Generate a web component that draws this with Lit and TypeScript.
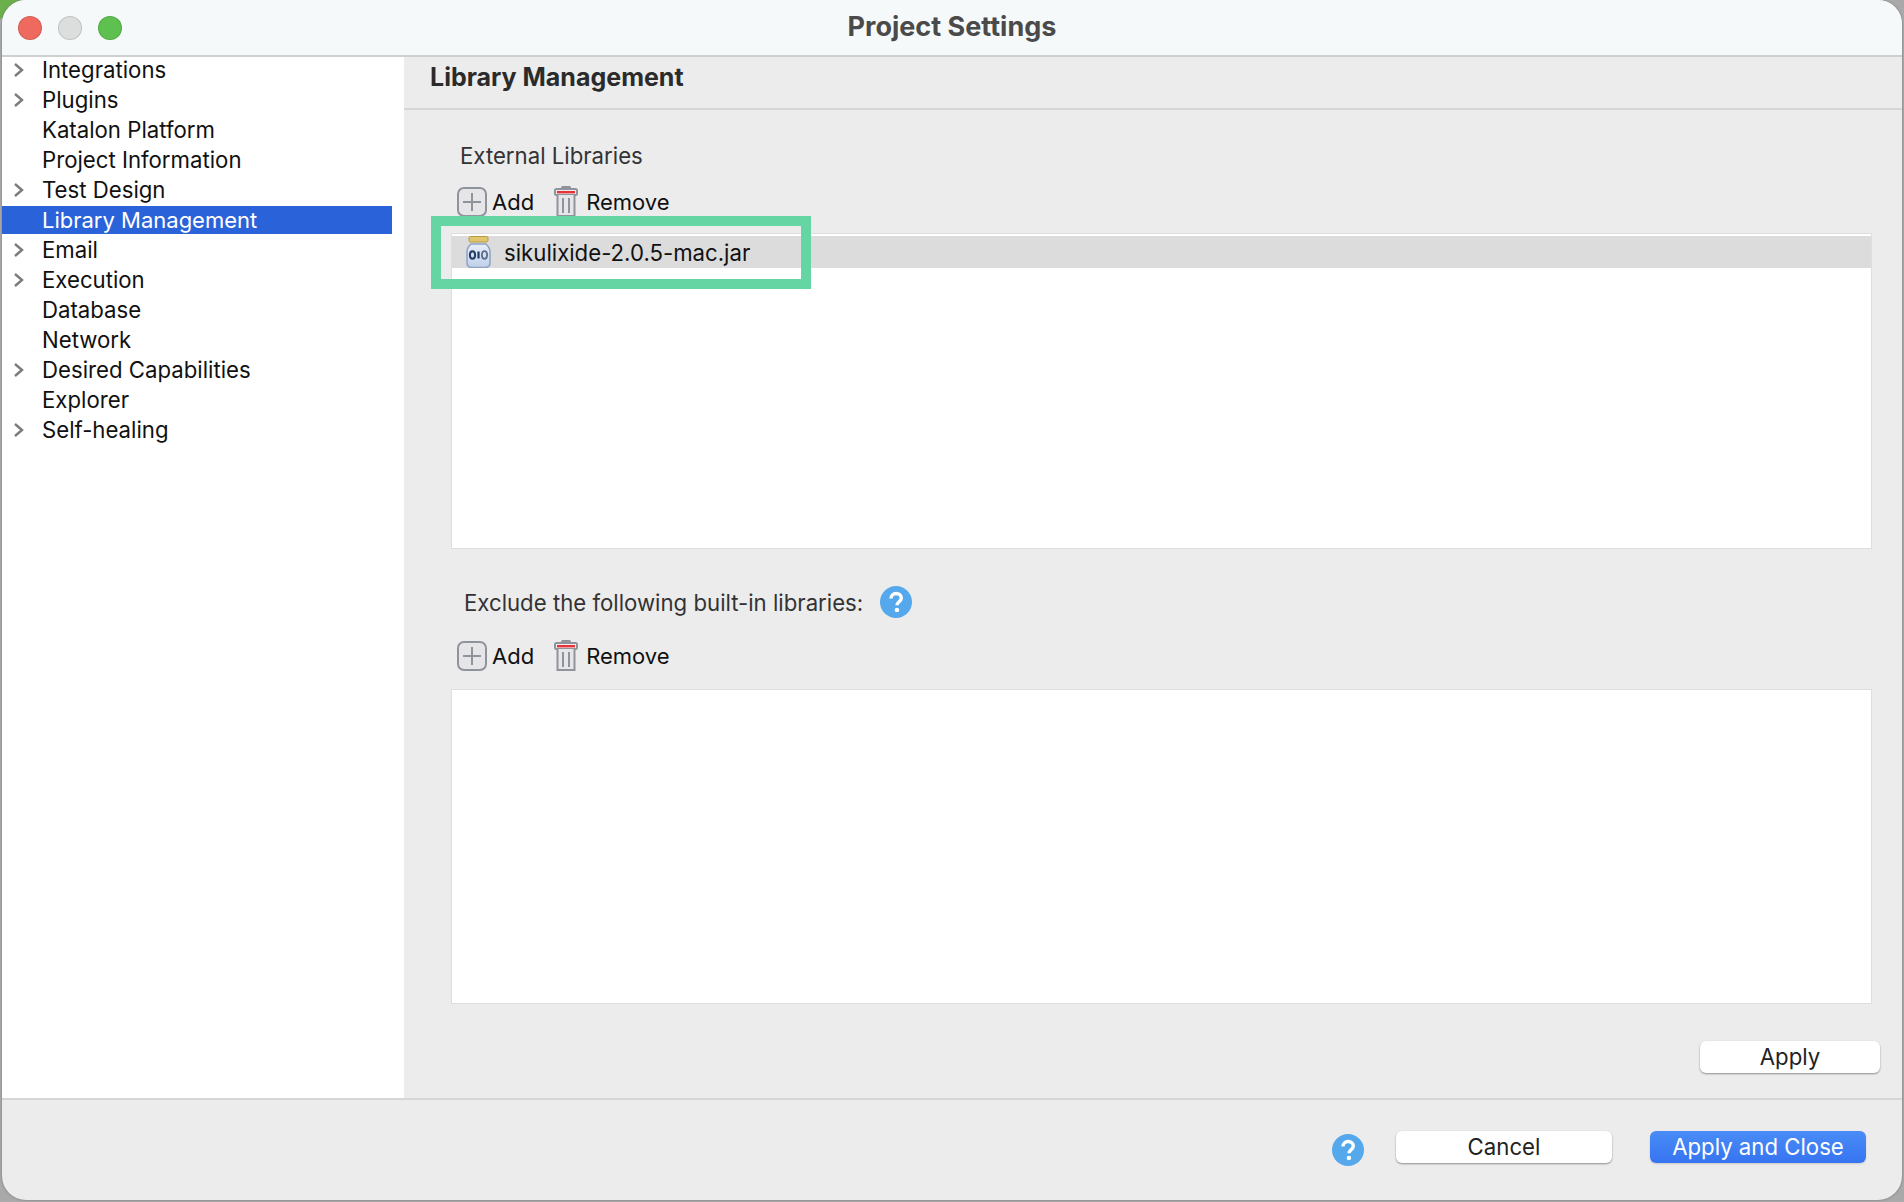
import { LitElement, html, css } from "lit";
import { customElement } from "lit/decorators.js";

const TREE: [string, boolean][] = [
  ["Integrations", true], ["Plugins", true], ["Katalon Platform", false],
  ["Project Information", false], ["Test Design", true], ["Library Management", false],
  ["Email", true], ["Execution", true], ["Database", false], ["Network", false],
  ["Desired Capabilities", true], ["Explorer", false], ["Self-healing", true],
];

const chevron = html`<svg class="chev" width="12" height="16" viewBox="0 0 12 16"><path d="M2 2l7 6-7 6" fill="none" stroke="#7b7b7b" stroke-width="2.4"/></svg>`;
const addIcon = html`<svg width="30" height="30" viewBox="0 0 30 30"><rect x="1" y="1" width="28" height="28" rx="6" fill="#e6e6e8" stroke="#8f939c" stroke-width="2"/><path d="M15 6v18M6 15h18" stroke="#8f939c" stroke-width="2"/></svg>`;
const trashIcon = html`<svg width="24" height="32" viewBox="0 0 24 32"><rect x="7" y="0" width="10" height="4" rx="1.5" fill="#8f939c"/><rect x="1" y="3" width="22" height="6" rx="1.5" fill="#eee" stroke="#8f939c" stroke-width="2"/><rect x="3" y="5" width="18" height="2.4" fill="#e8323a"/><path d="M3.5 9v21h17V9" fill="#e6e6e8" stroke="#8f939c" stroke-width="2"/><path d="M9 12v15M15 12v15" stroke="#8f939c" stroke-width="2"/></svg>`;
const jarIcon = html`<svg width="25" height="32" viewBox="0 0 25 32"><defs><linearGradient id="jg" x1="0" y1="0" x2="0" y2="1"><stop offset="0" stop-color="#e8eef8"/><stop offset="1" stop-color="#bfd0ea"/></linearGradient></defs><rect x="3" y="0.5" width="19" height="5.500" rx="1.5" fill="#e0c76e" stroke="#b89a3e"/><path d="M5 8h15c2.500 2.500 4 4 4 7.500v11c0 3-2 5-5 5H6c-3 0-5-2-5-5v-11C1 12 2.500 10.500 5 8z" fill="url(#jg)" stroke="#8ea3c4" stroke-width="1.500"/><ellipse cx="6.500" cy="19" rx="2.600" ry="3.800" fill="none" stroke="#253a66" stroke-width="2"/><path d="M12.500 15.500v7" stroke="#253a66" stroke-width="2.200"/><ellipse cx="18.500" cy="19" rx="2.600" ry="3.800" fill="none" stroke="#5c6c8c" stroke-width="1.800"/></svg>`;
const helpIcon = html`<svg width="32" height="32" viewBox="0 0 32 32"><circle cx="16" cy="16" r="16" fill="#55a8ec"/><path d="M11 12.500c0-3 2.200-5 5.200-5s5.100 1.800 5.100 4.400c0 3.600-4.300 3.900-4.300 7.300" fill="none" stroke="#fff" stroke-width="3.400"/><circle cx="16.900" cy="24" r="2.300" fill="#fff"/></svg>`;

@customElement("app-root")
export class AppRoot extends LitElement {
  static styles = css`
    :host { display: block; width: 1904px; height: 1202px; background: linear-gradient(135deg, #6ab04c 0 14px, #a9a9a9 14px); overflow: hidden; font-family: Inter, "Liberation Sans", sans-serif; }
    .win { margin-left: 2px; width: 1900px; height: 1200px; background: #ececec; border-radius: 24px; overflow: hidden; display: grid; grid-template-rows: 56px 1fr 102px; box-shadow: 0 0 2px #666; }
    .title { position: relative; display: flex; align-items: center; justify-content: center; background: #f6f9fa; border-bottom: 2px solid #cfcfcf; box-sizing: border-box; height: 57px; padding-bottom: 2px; font-size: 27px; font-weight: 700; color: #4a4a4a; }
    .lights { position: absolute; left: 16px; top: 16px; display: flex; gap: 16px; }
    .light { width: 24px; height: 24px; border-radius: 50%; box-sizing: border-box; border: 1px solid rgba(0,0,0,.12); }
    .red { background: #ee6a5f; } .grey { background: #dcdedd; } .green { background: #5ec04f; }
    .main { display: grid; grid-template-columns: 402px 1fr; min-height: 0; padding-top: 1px; }
    .side { background: #fff; overflow: hidden; padding-right: 12px; }
    .tree { margin-top: -2px; }
    .item { height: 30px; box-sizing: border-box; padding-bottom: 1px; display: flex; align-items: center; font-size: 22.2px; color: #111; position: relative; padding-left: 40px; }
    .item.sel { background: #2a62d9; color: #fff; height: 28px; margin: 1px 0; padding-bottom: 0; }
    .sel span { font-size: 22px; }
    .chev { position: absolute; left: 11px; top: 7px; }
    .pane { display: flex; flex-direction: column; min-width: 0; position: relative; }
    .head { height: 53px; flex: none; display: flex; align-items: center; padding-left: 26px; padding-bottom: 11px; font-size: 25px; font-weight: 700; color: #2b2b2b; border-bottom: 2px solid #d6d6d6; box-sizing: border-box; }
    .body { padding: 0 31px 0 48px; display: flex; flex-direction: column; flex: 1; }
    .label { font-size: 22.2px; color: #333; }
    .l1 { margin: 31px 0 0 8px; height: 29px; display: flex; align-items: center; }
    .bar { display: flex; align-items: center; height: 32px; font-size: 22px; color: #111; padding-left: 5px; }
    .bar .add { margin-left: 5px; margin-right: 20px; }
    .bar .rem { margin-left: 8px; }
    .b1 { margin-top: 16px; }
    .table { background: #fff; box-shadow: 0 0 0 1px #dedede; }
    .t1 { height: 314px; margin-top: 16px; padding-top: 2px; box-sizing: border-box; }
    .row { height: 32px; background: #dcdcdc; display: flex; align-items: center; padding-left: 14px; gap: 13px; font-size: 22.2px; color: #111; }
    .ex { margin: 34px 0 0 12px; height: 40px; display: flex; align-items: center; gap: 17px; }
    .b2 { margin-top: 18px; }
    .t2 { height: 313px; margin-top: 18px; }
    .applyrow { display: flex; justify-content: flex-end; margin: 38px -9px 0 0; }
    .btn { height: 32px; padding-bottom: 2px; border-radius: 6px; background: #fff; box-shadow: 0 1px 2px rgba(0,0,0,.4); display: flex; align-items: center; justify-content: center; font-size: 22.2px; color: #222; box-sizing: border-box; }
    .apply { width: 180px; }
    .foot { border-top: 2px solid #d6d6d6; display: flex; justify-content: flex-end; align-items: flex-start; padding: 31px 36px 0 0; box-sizing: border-box; }
    .foot .cancel { width: 216px; margin: 0 38px 0 32px; }
    .foot .primary { width: 216px; background: linear-gradient(#4a8cf7, #3674f0); color: #fff; box-shadow: 0 1px 2px rgba(0,0,0,.15); }
    .foot svg { margin-top: 3px; }
    .mark { position: absolute; left: 431px; top: 216px; width: 380px; height: 73px; box-sizing: border-box; border: 10px solid #64d5a3; pointer-events: none; }
    .stage { position: relative; }
  `;

  private tools() {
    return html`${addIcon}<span class="add">Add</span>${trashIcon}<span class="rem">Remove</span>`;
  }

  render() {
    return html`<div class="stage">
      <div class="win">
        <div class="title">
          <div class="lights"><div class="light red"></div><div class="light grey"></div><div class="light green"></div></div>
          Project Settings
        </div>
        <div class="main">
          <div class="side"><div class="tree">
            ${TREE.map(([t, c]) => html`<div class="item ${t === "Library Management" ? "sel" : ""}">${c ? chevron : ""}<span>${t}</span></div>`)}
          </div></div>
          <div class="pane">
            <div class="head">Library Management</div>
            <div class="body">
              <div class="label l1">External Libraries</div>
              <div class="bar b1">${this.tools()}</div>
              <div class="table t1"><div class="row">${jarIcon}<span>sikulixide-2.0.5-mac.jar</span></div></div>
              <div class="ex"><span class="label">Exclude the following built-in libraries:</span>${helpIcon}</div>
              <div class="bar b2">${this.tools()}</div>
              <div class="table t2"></div>
              <div class="applyrow"><div class="btn apply">Apply</div></div>
            </div>
          </div>
        </div>
        <div class="foot">
          ${helpIcon}
          <div class="btn cancel">Cancel</div>
          <div class="btn primary">Apply and Close</div>
        </div>
      </div>
      <div class="mark"></div>
    </div>`;
  }
}
